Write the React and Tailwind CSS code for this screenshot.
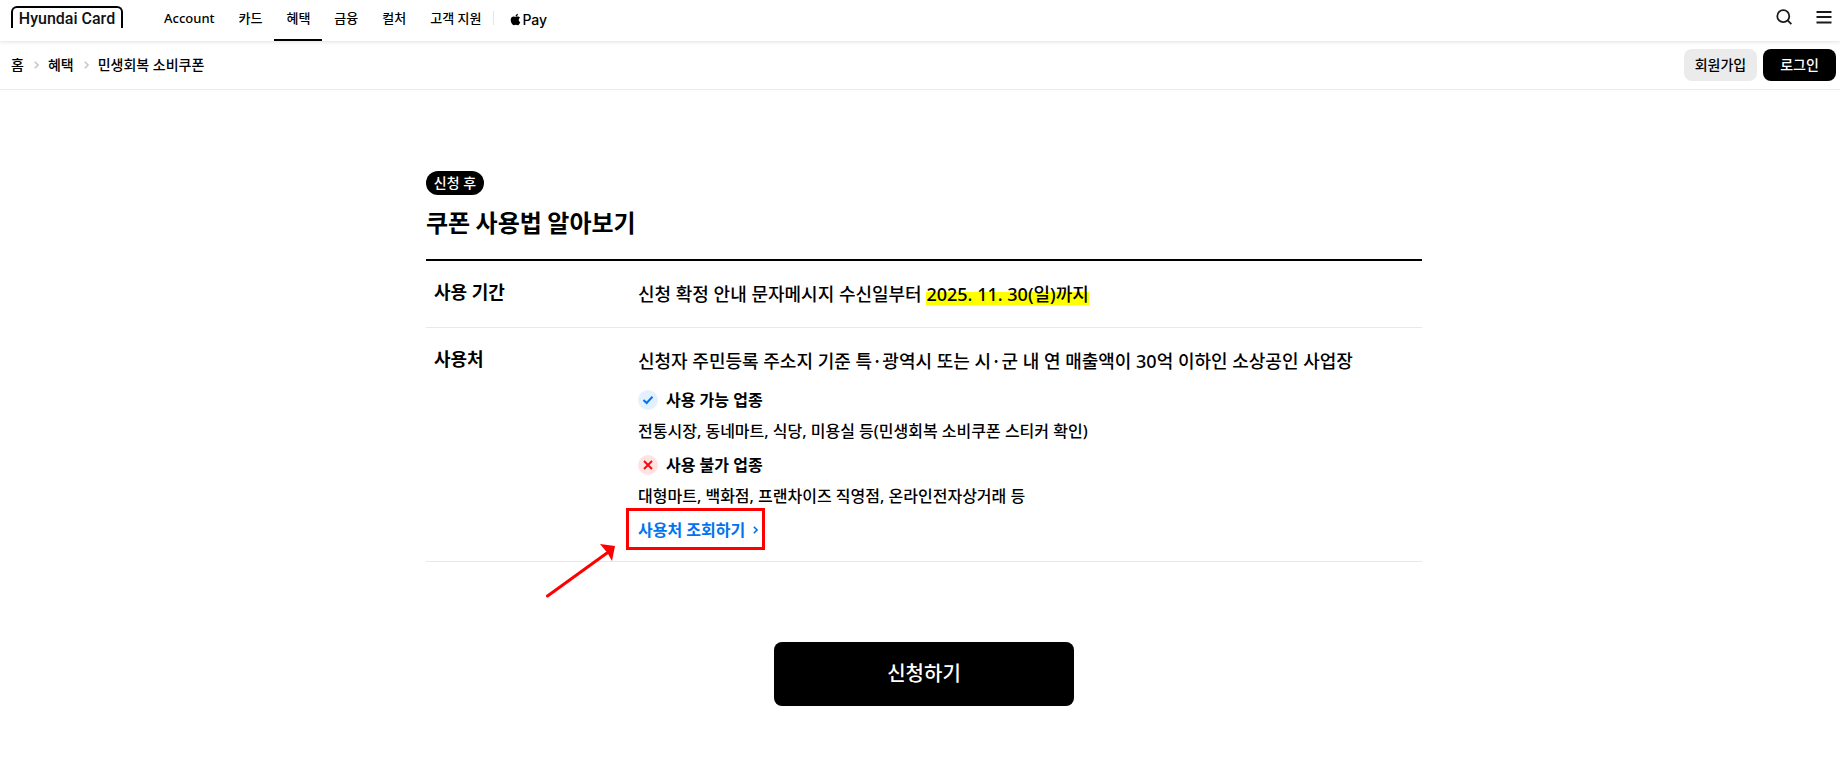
/**
 * Página do cupom de consumo (민생회복 소비쿠폰): cabeçalho com menu,
 * trilha de navegação e a tabela de uso do cupom com o botão de solicitação.
 */
import { FaApple } from 'react-icons/fa'

const MENU = [
  { label: 'Account', ativo: false },
  { label: '카드', ativo: false },
  { label: '혜택', ativo: true },
  { label: '금융', ativo: false },
  { label: '컬처', ativo: false },
  { label: '고객 지원', ativo: false },
]

const TRILHA = ['홈', '혜택', '민생회복 소비쿠폰']

function Seta({ className }) {
  return (
    <svg viewBox="0 0 5 8" className={className} fill="none" stroke="currentColor" strokeWidth="1.6" aria-hidden="true">
      <path d="M0.8 0.8 L4 4 L0.8 7.2" />
    </svg>
  )
}

function Cabecalho() {
  return (
    <header className="relative flex h-[41px] items-start bg-white pl-[11px] pr-2 shadow-[0_1px_4px_rgba(0,0,0,0.12)]">
      <a
        href="#"
        className="mt-[6px] flex h-[22px] w-[112px] justify-center rounded-t-[6px] border-2 border-b-0 border-black font-['Roboto'] text-[16px] leading-[22px] font-medium whitespace-nowrap text-[#111]"
      >
        Hyundai Card
      </a>
      <nav className="ml-[29px] flex h-full text-[13px] font-medium">
        {MENU.map((m) => (
          <a
            key={m.label}
            href="#"
            className={`h-full px-3 leading-[37px] whitespace-nowrap ${m.ativo ? 'border-b-2 border-black' : ''}`}
          >
            {m.label}
          </a>
        ))}
        <span className="mt-[11px] h-[14px] w-px bg-[#e5e5e5]" />
        <a href="#" aria-label="Apple Pay" className="ml-[15px] flex h-[39px] items-center font-['Inter'] text-[14px]">
          <FaApple className="size-[13px]" />
          Pay
        </a>
      </nav>
      <div className="ml-auto flex gap-6 pt-[9px]">
        <button type="button" aria-label="검색">
          <svg viewBox="0 0 16 16" className="size-4" fill="none" stroke="#1a1a1a" strokeWidth="1.8">
            <circle cx="7.3" cy="7.2" r="6" />
            <path d="M11.6 11.4 L15.4 15.2" />
          </svg>
        </button>
        <button type="button" aria-label="전체 메뉴">
          <svg viewBox="0 0 16 16" className="size-4" fill="none" stroke="#1a1a1a" strokeWidth="2">
            <path d="M0.5 3H15.5M0.5 8H15.5M0.5 13.5H15.5" />
          </svg>
        </button>
      </div>
    </header>
  )
}

function BarraTrilha() {
  return (
    <div className="flex h-[49px] items-center justify-between border-b border-[#ebebeb] pr-1 pl-[11px] text-[14px] font-medium">
      <nav aria-label="breadcrumb" className="pb-[2px]">
        <ol className="flex items-center">
          {TRILHA.map((t, i) => (
            <li key={t} className="flex items-center">
              {i > 0 && <Seta className="mt-[2px] mr-[9px] ml-[10px] h-2 w-[5px] text-[#c8c8c8]" />}
              <a href="#">{t}</a>
            </li>
          ))}
        </ol>
      </nav>
      <div className="flex gap-[6px]">
        <button type="button" className="h-8 w-[73px] rounded-lg bg-[#ebebeb] pb-[2px]">
          회원가입
        </button>
        <button type="button" className="h-8 w-[73px] rounded-lg bg-black pb-[2px] text-white">
          로그인
        </button>
      </div>
    </div>
  )
}

function TituloTipo({ permitido, children }) {
  return (
    <h3 className="flex items-center gap-2 text-[16px] leading-6 font-bold">
      <svg viewBox="0 0 20 20" className="size-5" fill="none" strokeWidth="2" aria-hidden="true">
        <circle cx="10" cy="10" r="10" fill={permitido ? '#e3f0fd' : '#ffe3e3'} />
        {permitido ? (
          <path d="M5.5 10 L8.6 13 L14.5 6.8" stroke="#0074f0" />
        ) : (
          <path d="M6 6 L14 14 M14 6 L6 14" stroke="#f50a14" />
        )}
      </svg>
      {children}
    </h3>
  )
}

// ponto médio com a largura da fonte coreana
function Ponto() {
  return <span className="font-['Noto_Sans_CJK_KR',sans-serif] leading-none">·</span>
}

function TabelaUso() {
  return (
    <table className="mt-[21px] w-full border-t-2 border-black text-left text-[18px] leading-[26px] font-medium">
      <tbody>
        <tr className="border-b border-[#e8e8e8]">
          <th scope="row" className="w-[212px] pt-[18px] pl-2 align-top font-bold">
            사용 기간
          </th>
          <td className="py-5 align-top">
            신청 확정 안내 문자메시지 수신일부터{' '}
            <mark className="inline-block bg-transparent bg-[linear-gradient(transparent_9px,#ffff00_9px)] leading-[22px] text-black">
              2025. 11. 30(일)까지
            </mark>
          </td>
        </tr>
        <tr className="border-b border-[#e8e8e8]">
          <th scope="row" className="pt-[18px] pl-2 align-top font-bold">
            사용처
          </th>
          <td className="pt-5 pb-[19px] align-top">
            <p>
              신청자 주민등록 주소지 기준 특<Ponto />광역시 또는 시<Ponto />군 내 연 매출액이 30억 이하인 소상공인 사업장
            </p>
            <div className="mt-[14px] flex flex-col gap-[10px]">
              <div className="flex flex-col gap-[7px]">
                <TituloTipo permitido>사용 가능 업종</TituloTipo>
                <p className="text-[16px] leading-6">
                  전통시장, 동네마트, 식당, 미용실 등(민생회복 소비쿠폰 스티커 확인)
                </p>
              </div>
              <div className="flex flex-col gap-[7px]">
                <TituloTipo permitido={false}>사용 불가 업종</TituloTipo>
                <p className="text-[16px] leading-6">대형마트, 백화점, 프랜차이즈 직영점, 온라인전자상거래 등</p>
              </div>
              <div className="relative flex">
                <a href="#" className="flex items-center gap-2 text-[16px] leading-6 font-bold text-[#0074f0]">
                  사용처 조회하기
                  <Seta className="h-2 w-[5px]" />
                </a>
                {/* moldura e seta de destaque do link */}
                <span className="pointer-events-none absolute -top-[10px] -left-3 h-[42px] w-[139px] border-3 border-[#ff0000]" />
                <svg
                  viewBox="0 0 70 54"
                  className="pointer-events-none absolute top-[26px] -left-[92px] h-[54px] w-[70px]"
                  aria-hidden="true"
                >
                  <path d="M1.5 52 L61 9" stroke="#ff0000" strokeWidth="3" strokeLinecap="round" />
                  <path d="M54 0 L69 2 L66 17 L61.5 9 Z" fill="#ff0000" />
                </svg>
              </div>
            </div>
          </td>
        </tr>
      </tbody>
    </table>
  )
}

export default function App() {
  return (
    <div className="bg-white font-['Noto_Sans','Noto_Sans_CJK_KR',sans-serif] text-black">
      <Cabecalho />
      <BarraTrilha />
      <main className="pt-[81px] pb-16 pl-2">
        <section className="mx-auto max-w-[996px]">
          <span className="flex h-6 w-[58px] items-center justify-center rounded-full bg-black pb-[2px] text-[14px] font-medium text-white">
            신청 후
          </span>
          <h2 className="mt-[11px] font-['Noto_Sans_CJK_KR',sans-serif] text-[24px] leading-8 font-bold">
            쿠폰 사용법 알아보기
          </h2>
          <TabelaUso />
          <button
            type="button"
            className="mx-auto mt-20 flex h-16 w-[300px] items-center justify-center rounded-lg bg-black text-[20px] font-medium text-white"
          >
            신청하기
          </button>
        </section>
      </main>
    </div>
  )
}
